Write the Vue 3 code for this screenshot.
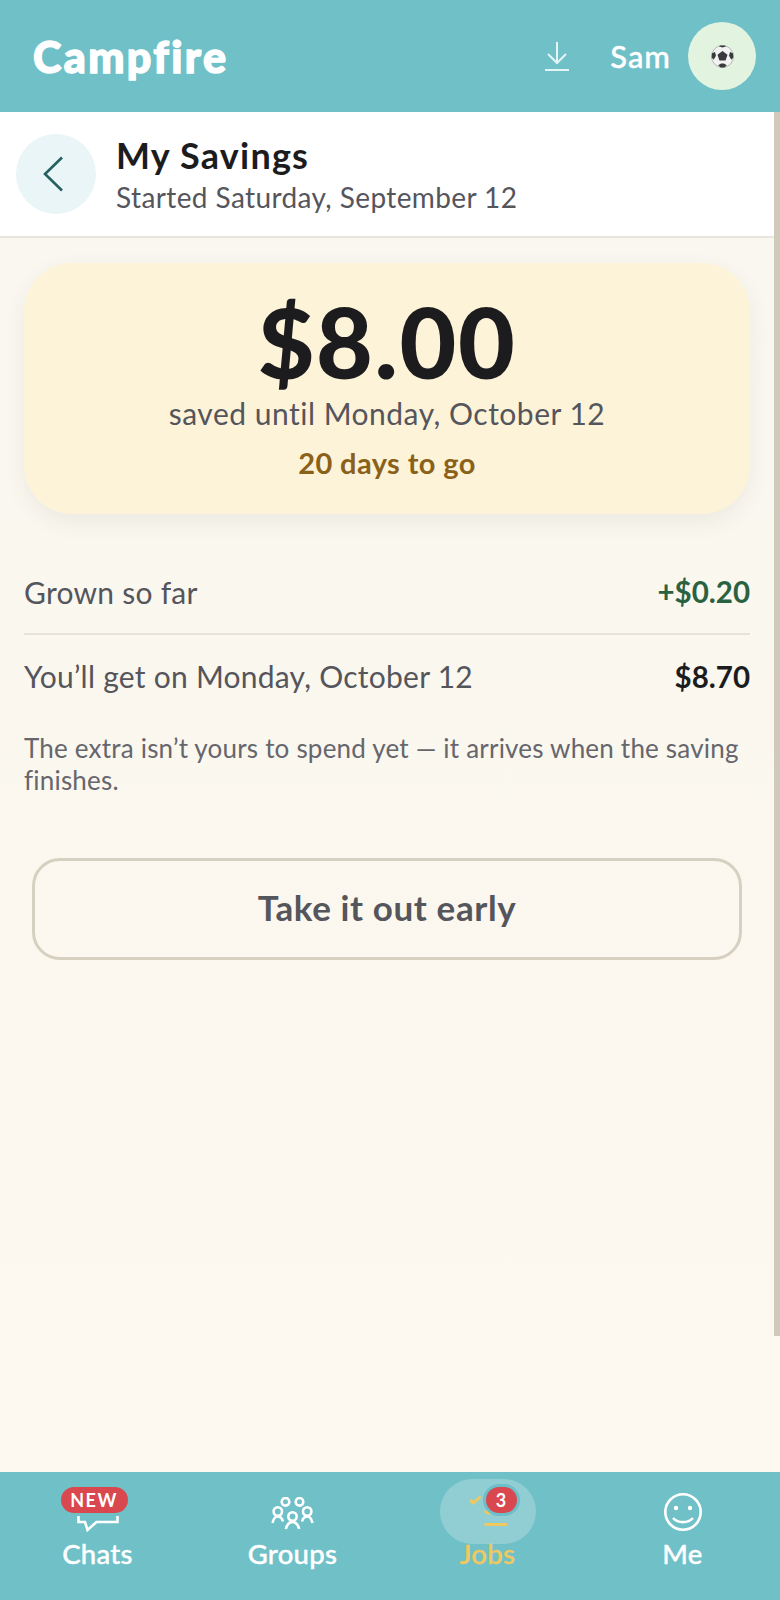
<template>
  <div class="page">
    <header class="topbar">
      <div class="logo">Campfire</div>
      <div class="top-right">
        <svg class="download" viewBox="0 0 24 30" fill="none" stroke="currentColor" stroke-width="2">
          <path d="M12 1v20M3 13l9 9 9-9M0 29h24" />
        </svg>
        <span class="user">Sam</span>
        <div class="avatar">
          <svg viewBox="0 0 24 24" width="23" height="23">
            <circle cx="12" cy="12" r="11.5" fill="#f2f2f2" stroke="#9a9a9a" stroke-width="0.7" />
            <path d="M12 6.300l5.200 3.800-2 6.100H8.800l-2-6.100z" fill="#3a3a3c" />
            <path d="M8 1.200L12 2.600l4-1.400-2-.8h-4zM1 8.500l3.200-1.200 1 4L2.800 15.500 .7 13zM23 8.500l-3.200-1.200-1 4 2.400 4.200 2.100-2.500zM7.500 21.200l3-1.800h3l3 1.800-2.500 2.400h-4z" fill="#3a3a3c" />
          </svg>
        </div>
      </div>
    </header>

    <div class="subhead">
      <button class="back">
        <svg viewBox="0 0 20 36" width="20" height="36" fill="none" stroke="#24605f" stroke-width="2.6">
          <path d="M19 1.500L2 18l17 16.500" />
        </svg>
      </button>
      <div class="titles">
        <h1>My Savings</h1>
        <p>Started Saturday, September 12</p>
      </div>
    </div>

    <main class="content">
      <section class="hero">
        <div class="amount">$8.00</div>
        <div class="until">saved until Monday, October 12</div>
        <div class="togo">20 days to go</div>
      </section>

      <div class="row first">
        <span>Grown so far</span>
        <strong class="green">+$0.20</strong>
      </div>
      <div class="row second">
        <span>You’ll get on Monday, October 12</span>
        <strong>$8.70</strong>
      </div>
      <p class="note">The extra isn’t yours to spend yet — it arrives when the saving finishes.</p>

      <button class="early">Take it out early</button>
    </main>

    <nav class="tabs">
      <div class="tab" v-for="tab in tabs" :key="tab.name" :class="{ active: tab.active }">
        <div class="tab-icon">
          <template v-if="tab.name === 'Chats'">
            <svg class="ico ico-chat" viewBox="0 0 44 36" width="44" height="36" fill="none" stroke="currentColor" stroke-width="2.6">
              <path d="M2.500 16v6H9l2.500 8 9-8h21v-6" />
            </svg>
            <span class="new">NEW</span>
          </template>
          <svg v-else-if="tab.name === 'Groups'" class="ico ico-groups" viewBox="0 0 43 34" width="43" height="34" fill="none" stroke="currentColor" stroke-width="2.600">
            <circle cx="14.500" cy="4.800" r="3.800" />
            <circle cx="28.500" cy="4.800" r="3.800" />
            <circle cx="6.800" cy="14.500" r="4.200" />
            <circle cx="36.200" cy="14.500" r="4.200" />
            <circle cx="21.500" cy="19.500" r="4.200" />
            <path d="M1.500 26C2.500 21.500 4.500 19.500 6.800 19.500S11 21 12 24.500M41.500 26C40.500 21.500 38.500 19.500 36.200 19.500S32 21 31 24.500M14.800 32C16 27.500 18.800 25 21.500 25S27 27.500 28.200 32" />
          </svg>
          <template v-else-if="tab.name === 'Jobs'">
            <div class="pill"></div>
            <svg class="ico ico-jobs" viewBox="0 0 44 44" width="44" height="44" fill="none" stroke="currentColor" stroke-width="3">
              <path d="M4 5l3.500 3 7-6.500M18.500 16l5.500 3M18.500 29.500H41" />
            </svg>
            <span class="count">3</span>
          </template>
          <svg v-else class="ico ico-me" viewBox="0 0 40 40" width="40" height="40" fill="none" stroke="currentColor" stroke-width="2.600">
            <circle cx="20" cy="20" r="17.700" />
            <circle cx="13" cy="16" r="2.200" fill="currentColor" stroke="none" />
            <circle cx="27" cy="16" r="2.200" fill="currentColor" stroke="none" />
            <path d="M10 26c5 5.500 15 5.500 20 0" />
          </svg>
        </div>
        <span class="tab-name">{{ tab.name }}</span>
      </div>
    </nav>

    <div class="scroll-thumb"></div>
  </div>
</template>

<script setup>
const tabs = [
  { name: 'Chats' },
  { name: 'Groups' },
  { name: 'Jobs', active: true },
  { name: 'Me' }
]
</script>

<style>
html, body {
  margin: 0;
  overflow: hidden;
}
</style>

<style scoped>
.page {
  position: relative;
  width: 780px;
  height: 1600px;
  display: flex;
  flex-direction: column;
  background: #fbf8f0;
  font-family: Lato, "Open Sans", sans-serif;
  color: #1c1c1e;
  overflow: hidden;
}

.topbar {
  height: 112px;
  flex: none;
  background: #70c0c8;
  color: #fff;
  display: flex;
  align-items: center;
  justify-content: space-between;
  padding: 0 24px 0 33px;
  box-sizing: border-box;
}

.logo {
  font-size: 43px;
  font-weight: 900;
  letter-spacing: 2.400px;
  -webkit-text-stroke: 1.400px #fff;
}

.top-right {
  display: flex;
  align-items: center;
}

.download {
  width: 24px;
  height: 30px;
  color: #e4f5f5;
  margin-right: 41px;
}

.user {
  font-size: 31px;
  font-weight: 500;
  letter-spacing: 1px;
  -webkit-text-stroke: 0.400px #fff;
  margin-right: 17px;
}

.avatar {
  width: 68px;
  height: 68px;
  border-radius: 50%;
  background: #e2f3e0;
  display: flex;
  align-items: center;
  justify-content: center;
}

.subhead {
  height: 126px;
  flex: none;
  box-sizing: border-box;
  background: #fff;
  border-bottom: 2px solid #e9e5dc;
  display: flex;
  align-items: center;
  gap: 20px;
  padding: 0 30px 0 16px;
}

.back {
  width: 80px;
  height: 80px;
  border: 0;
  border-radius: 50%;
  background: #e9f5f6;
  padding: 0 6px 0 0;
  display: flex;
  align-items: center;
  justify-content: center;
}

.titles {
  margin-top: 4px;
}

h1 {
  margin: 0;
  font-size: 36px;
  line-height: 41px;
  font-weight: 700;
  letter-spacing: 1.200px;
}

.titles p {
  margin: 0;
  font-size: 28px;
  line-height: 42px;
  letter-spacing: 0.400px;
  color: #55555c;
}

.content {
  flex: 1;
  padding: 25px 30px 0 24px;
  background: linear-gradient(#f9f7ef, #fdf8f0);
}

.hero {
  height: 251px;
  box-sizing: border-box;
  padding-top: 28px;
  border-radius: 48px;
  background: #fdf3d9;
  box-shadow: 0 8px 24px rgba(0, 0, 0, 0.06);
  text-align: center;
}

.amount {
  font-size: 98px;
  line-height: 100px;
  font-weight: 900;
  letter-spacing: 1.600px;
}

.until {
  font-size: 30px;
  line-height: 44px;
  letter-spacing: 0.500px;
  color: #55555c;
}

.togo {
  margin-top: 10px;
  font-size: 29px;
  line-height: 36px;
  font-weight: 700;
  letter-spacing: 0.400px;
  color: #8a6118;
}

.row {
  display: flex;
  justify-content: space-between;
  align-items: center;
  font-size: 30px;
  letter-spacing: 0.250px;
  color: #55555c;
}

.row.first {
  margin-top: 36px;
  height: 83px;
  border-bottom: 2px solid #e7e3da;
}

.row.second {
  height: 82px;
}

.row strong {
  color: #1c1c1e;
  font-size: 29.500px;
  font-weight: 700;
  letter-spacing: 0;
}

.row strong.green {
  color: #2a6141;
}

.note {
  margin: 15px 0 0;
  font-size: 26px;
  line-height: 32px;
  letter-spacing: 0.200px;
  color: #66666c;
}

.early {
  display: block;
  width: 710px;
  height: 102px;
  margin: 62px 0 0 8px;
  padding: 0 0 4px;
  box-sizing: border-box;
  background: transparent;
  border: 3px solid #d5d0bf;
  border-radius: 28px;
  font-family: inherit;
  font-size: 35px;
  font-weight: 700;
  letter-spacing: 0.600px;
  color: #55555c;
}

.tabs {
  height: 128px;
  flex: none;
  background: #70c0c8;
  color: #fff;
  display: grid;
  grid-template-columns: repeat(4, 1fr);
}

.tab {
  display: flex;
  flex-direction: column;
  align-items: center;
}

.tab.active {
  color: #f0c860;
}

.tab-icon {
  position: relative;
  width: 96px;
  height: 65px;
  display: flex;
  align-items: center;
  justify-content: center;
}

.tab-name {
  font-size: 27.500px;
  line-height: 34px;
  font-weight: 500;
  letter-spacing: 0.300px;
  -webkit-text-stroke: 0.400px currentColor;
}

.ico {
  position: relative;
}

.ico-chat {
  top: 13.500px;
}

.ico-groups {
  top: 9.500px;
}

.ico-jobs {
  top: 12.500px;
}

.ico-me {
  top: 7.500px;
}

.new {
  position: absolute;
  left: 11px;
  top: 15px;
  width: 67px;
  height: 26px;
  border-radius: 13px;
  background: #d9484f;
  color: #fff;
  font-size: 18px;
  line-height: 26px;
  font-weight: 700;
  letter-spacing: 1.500px;
  text-align: center;
}

.pill {
  position: absolute;
  left: 0;
  top: 7px;
  width: 96px;
  height: 65px;
  border-radius: 36px;
  background: rgba(255, 255, 255, 0.23);
}

.count {
  position: absolute;
  left: 46px;
  top: 15px;
  width: 31px;
  height: 26px;
  border-radius: 13px;
  background: #d9484f;
  box-shadow: 0 0 0 3px #6cbec8;
  color: #fff;
  font-size: 18px;
  line-height: 26px;
  font-weight: 700;
  text-align: center;
}

.scroll-thumb {
  position: absolute;
  right: 0;
  top: 112px;
  width: 6px;
  height: 1224px;
  background: #d0cabb;
}
</style>
